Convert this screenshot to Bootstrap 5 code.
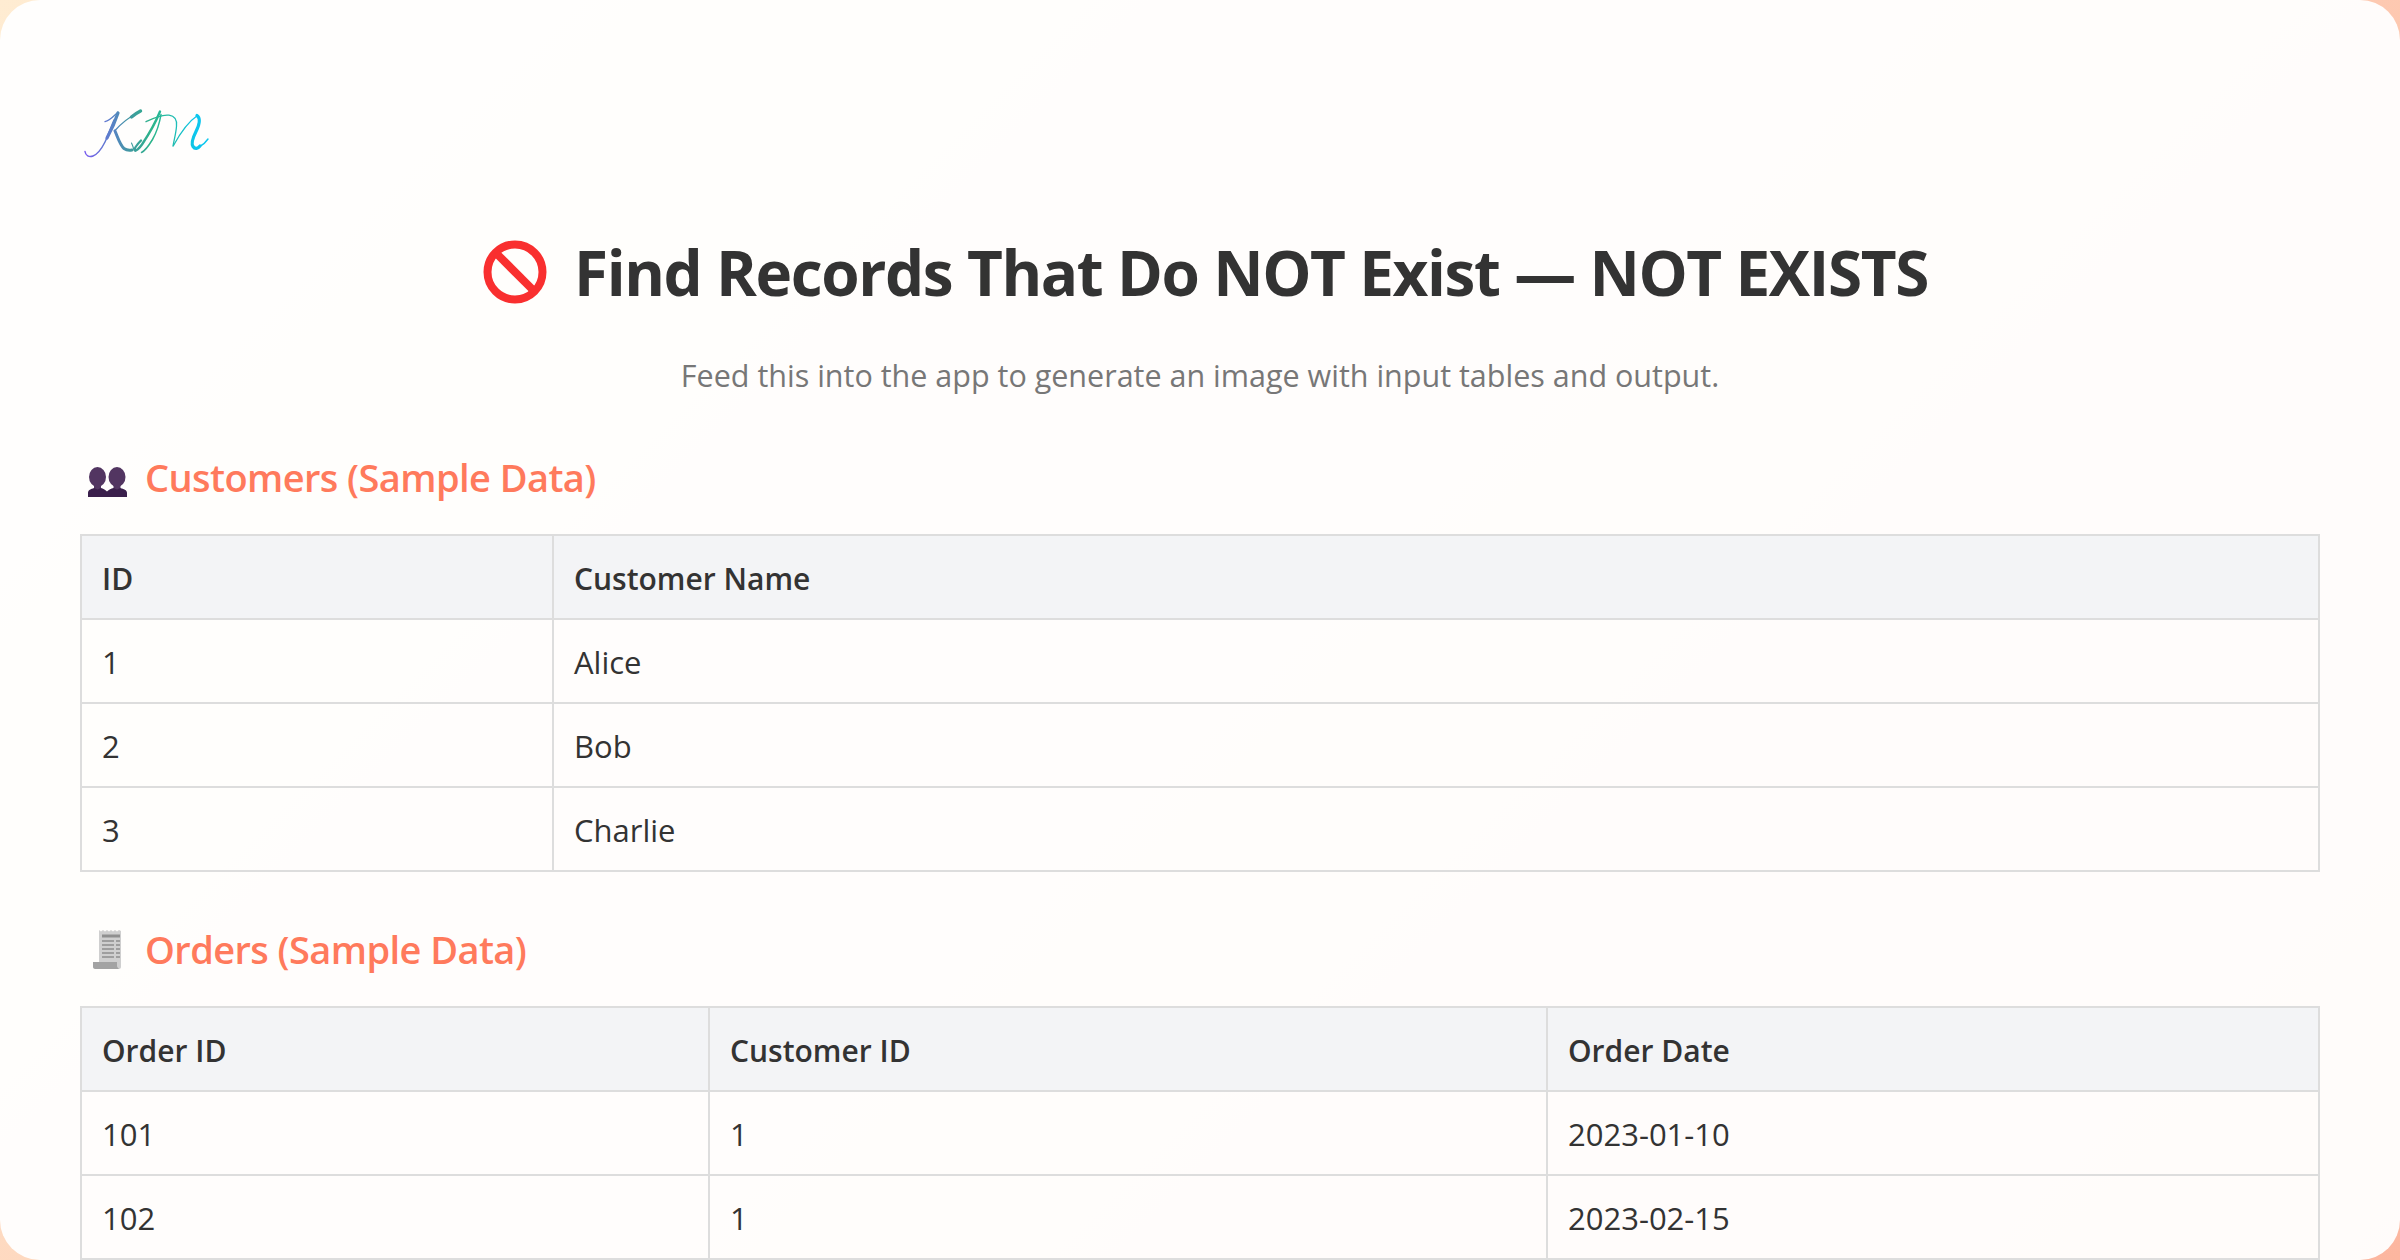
<!doctype html>
<html lang="en"><head><meta charset="utf-8"><title>NOT EXISTS</title>
<link rel="stylesheet" href="https://cdn.jsdelivr.net/npm/bootstrap@5.3.0/dist/css/bootstrap.min.css">
<style>
html,body{height:100%}
body{background:linear-gradient(135deg,#ffecd2,#fcb69f);overflow:hidden;font-family:"Open Sans","Noto Sans",sans-serif;color:#333}
.sheet{height:1260px;background:rgba(255,255,255,.95);border-radius:40px;padding:104px 80px 0;overflow:hidden}
.brand{display:block;width:130px;height:60px}
.page-title{font-size:62px;font-weight:700;line-height:86px;margin:65px 0 0;padding-left:11px;color:#333;letter-spacing:-1.41px}
.title-icon{width:64px;height:64px;margin-right:27px}
.subtitle{font-size:30.5px;line-height:44px;color:#777;margin:38px 0 0}
.sec-head{font-size:38px;font-weight:600;line-height:52px;color:#ff7a5c;margin:0 0 31px;letter-spacing:-.58px}
.sec-icon{width:48px;height:48px;margin:0 13px 0 4px}
.first-head{margin-top:54px}
.second-head{margin-top:51px}
.data-table{--bs-table-bg:transparent;--bs-table-color:#333;table-layout:fixed;margin:0;font-size:30px;border-collapse:collapse;color:#333}
.data-table th,.data-table td{border:2px solid #ddd;padding:19px 20px 15px;line-height:48px;font-weight:400;box-shadow:none}
.data-table td{font-size:31px;padding-top:18px;padding-bottom:16px}
.data-table th{background:#f3f4f6;font-weight:600}
.c-id{width:472px}.c-a{width:628px}.c-b{width:838px}
</style></head><body>
<div class="sheet">
<svg class="brand" viewBox="0 0 130 60" fill="none" stroke-linecap="round" aria-label="KM logo">
<defs><linearGradient id="lg" gradientUnits="userSpaceOnUse" x1="4" y1="30" x2="128" y2="30"><stop offset="0" stop-color="#7b5cf0"/><stop offset=".22" stop-color="#5a80c8"/><stop offset=".38" stop-color="#3f9a9e"/><stop offset=".55" stop-color="#2cb58a"/><stop offset=".72" stop-color="#20bcb0"/><stop offset=".9" stop-color="#0cc6ee"/></linearGradient></defs>
<g stroke="url(#lg)">
<path stroke-width="1.5" d="M5 47.500c.5 4 4 6 8 4.500 5-2 8-6 12-14 3-6 5-13 9-22"/>
<path stroke-width="3.200" d="M38 9c-2 6-6 16-11 25"/>
<path stroke-width="1.300" d="M25 17.700c5-1 9-6 13-9.500"/>
<path stroke-width="1.300" d="M61 6.500c-9 5-19 12-26 20"/>
<path stroke-width="3.400" d="M60.500 7c-3 1.500-6 3.500-9 6"/>
<path stroke-width="3" d="M35 27c3 7 5 14 9 17.500 2 1.500 5 2 8 1.500"/>
<path stroke-width="1.100" d="M51.500 39c1 2 2 5 2.500 7"/>
<path stroke-width="2.400" d="M80 7.500c-4 10-12 24-18 33-2.500 3.500-6 7-7 6-1-2 2-6 6-10"/>
<path stroke-width="1.500" d="M61.500 48.500c4-2 8-8 11-13 4-7 7-16 8.500-25"/>
<path stroke-width="1.300" d="M66 17.700c6-3 15-7.500 23-6.500 7 1 8 6 7.500 11-.5 7-2.500 14-3.500 20"/>
<path stroke-width="1.300" d="M93.500 41.500c6-11 15-24 24-30"/>
<path stroke-width="3.200" d="M117 11.500c4 3 2 10-1 16-3 6-5 12-3 15 2 3 5 2 7-.5"/>
<path stroke-width="1.400" d="M119 43c3-1.500 7-5 9-8"/>
</g></svg>
<h1 class="page-title d-flex justify-content-center align-items-center">
<svg class="title-icon" viewBox="0 0 64 64" fill="none" stroke="#f92f2f" stroke-width="8" aria-hidden="true"><circle cx="32" cy="32" r="27.500"/><path d="M13 13l38 38"/></svg>
<span>Find Records That Do NOT Exist — NOT EXISTS</span></h1>
<p class="subtitle text-center">Feed this into the app to generate an image with input tables and output.</p>

<h2 class="sec-head first-head d-flex align-items-center">
<svg class="sec-icon" viewBox="0 0 48 48" aria-hidden="true">
<g fill="#523561"><ellipse cx="13.500" cy="24" rx="8.500" ry="10"/><ellipse cx="33" cy="24" rx="8.500" ry="10"/><path d="M10 32h7v5h-7zM29.500 32h7v5h-7z"/></g>
<path fill="#3a1f4b" d="M4 40c0-3 3-4 6-5l3.500 1.500L17 35c2 .5 4 1.500 6 3.500 2-2 4-3 6.500-3.500l3.500 1.500 3.500-1.500c3 1 6.500 2 6.500 5v4H4z"/>
</svg>
<span>Customers (Sample Data)</span></h2>
<table class="table table-bordered data-table">
<colgroup><col class="c-id"><col></colgroup>
<thead><tr><th>ID</th><th>Customer Name</th></tr></thead>
<tbody><tr><td>1</td><td>Alice</td></tr><tr><td>2</td><td>Bob</td></tr><tr><td>3</td><td>Charlie</td></tr></tbody>
</table>

<h2 class="sec-head second-head d-flex align-items-center">
<svg class="sec-icon" viewBox="0 0 48 48" aria-hidden="true">
<path fill="#cfcfcf" d="M15 5l2 1.500 2-1.500 2 1.500 2-1.500 2 1.500 2-1.500 2 1.500 2-1.500 2 1.500 2-1.500 2 1v36c0 1-1 2-2 2H14c-1 0-2-1-2-2l3-3z"/>
<path fill="#a3a3a3" d="M9 37h24v4c0 1 1 2 2 3H11c-1 0-2-1-2-2z"/>
<g stroke="#8f8f8f" stroke-width="1.500"><path stroke-width="3" d="M18 11h18"/><path d="M18 16h12M32 16h4M18 20h12M32 20h4M18 24h12M32 24h4M18 28h12M32 28h4M18 32h12M32 32h4"/></g>
</svg>
<span>Orders (Sample Data)</span></h2>
<table class="table table-bordered data-table">
<colgroup><col class="c-a"><col class="c-b"><col></colgroup>
<thead><tr><th>Order ID</th><th>Customer ID</th><th>Order Date</th></tr></thead>
<tbody><tr><td>101</td><td>1</td><td>2023-01-10</td></tr><tr><td>102</td><td>1</td><td>2023-02-15</td></tr></tbody>
</table>
</div>
<script src="https://cdn.jsdelivr.net/npm/bootstrap@5.3.0/dist/js/bootstrap.bundle.min.js"></script>
</body></html>
